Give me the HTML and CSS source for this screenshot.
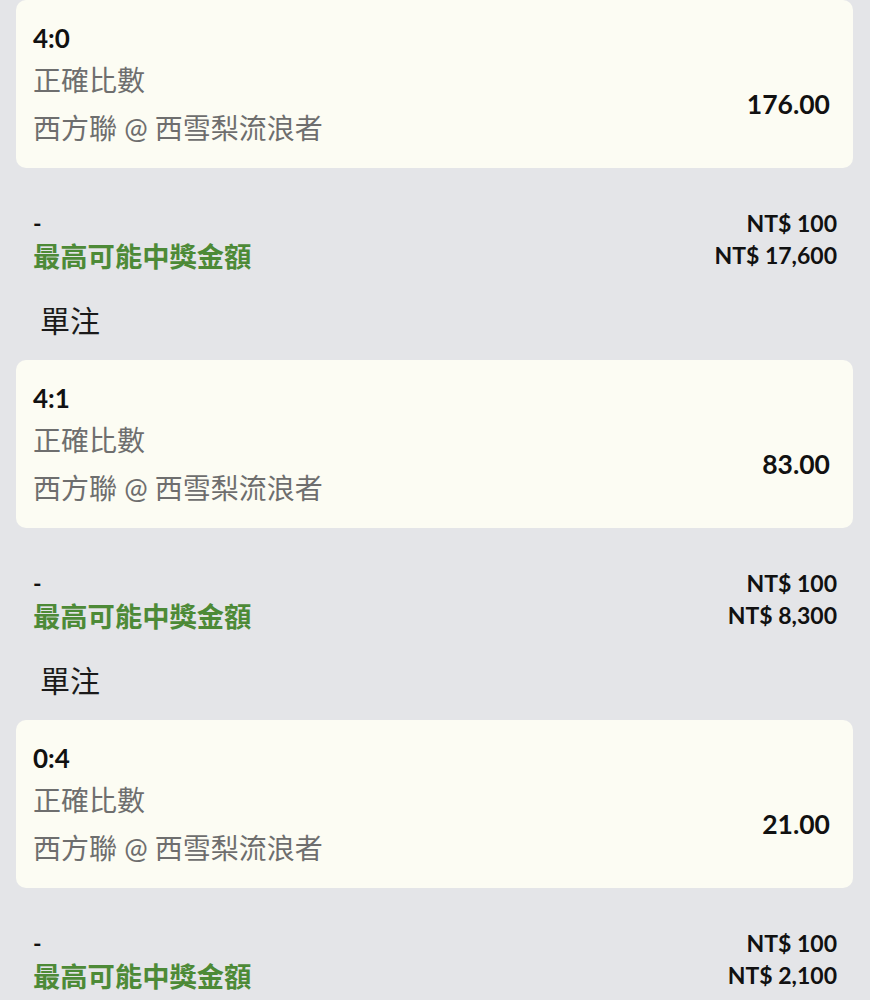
FILE: index.html
```html
<!DOCTYPE html>
<html lang="zh-Hant">
<head>
<meta charset="utf-8">
<title>單注</title>
<link rel="stylesheet" href="styles.css">
</head>
<body>
<div class="list">
  <section class="bet">
    <div class="card">
      <div class="score">4:0</div>
      <div class="card-row">
        <div class="info">
          <div class="market">正確比數</div>
          <div class="match">西方聯 @ 西雪梨流浪者</div>
        </div>
        <div class="odds">176.00</div>
      </div>
    </div>
    <div class="summary">
      <div class="sum-row"><span class="dash">-</span><span class="amt">NT$ 100</span></div>
      <div class="sum-row"><span class="win-label">最高可能中獎金額</span><span class="amt">NT$ 17,600</span></div>
    </div>
    <div class="type">單注</div>
  </section>
  <section class="bet">
    <div class="card">
      <div class="score">4:1</div>
      <div class="card-row">
        <div class="info">
          <div class="market">正確比數</div>
          <div class="match">西方聯 @ 西雪梨流浪者</div>
        </div>
        <div class="odds">83.00</div>
      </div>
    </div>
    <div class="summary">
      <div class="sum-row"><span class="dash">-</span><span class="amt">NT$ 100</span></div>
      <div class="sum-row"><span class="win-label">最高可能中獎金額</span><span class="amt">NT$ 8,300</span></div>
    </div>
    <div class="type">單注</div>
  </section>
  <section class="bet">
    <div class="card">
      <div class="score">0:4</div>
      <div class="card-row">
        <div class="info">
          <div class="market">正確比數</div>
          <div class="match">西方聯 @ 西雪梨流浪者</div>
        </div>
        <div class="odds">21.00</div>
      </div>
    </div>
    <div class="summary">
      <div class="sum-row"><span class="dash">-</span><span class="amt">NT$ 100</span></div>
      <div class="sum-row"><span class="win-label">最高可能中獎金額</span><span class="amt">NT$ 2,100</span></div>
    </div>
  </section>
</div>
</body>
</html>
```
FILE: styles.css
```css
html, body {
  margin: 0;
  padding: 0;
  background: #e4e5e8;
}
body {
  font-family: Lato, "Noto Sans CJK TC", sans-serif;
  color: #111;
}
.list {
  padding: 0 17px 8px 16px;
}
.bet {
  display: flex;
  flex-direction: column;
}
.card {
  background: #fcfcf3;
  border-radius: 10px;
  height: 168px;
  box-sizing: border-box;
  padding: 20px 23px 16px 17px;
}
.score {
  font-size: 26px;
  font-weight: 700;
  line-height: 36px;
  color: #111;
}
.card-row {
  display: flex;
  align-items: center;
  justify-content: space-between;
}
.market, .match {
  font-size: 28px;
  line-height: 48px;
  color: #6e6e6e;
}
.odds {
  font-size: 26.5px;
  font-weight: 700;
  color: #111;
}
.summary {
  margin-top: 39px;
  padding: 0 16px 0 17px;
}
.sum-row {
  display: flex;
  justify-content: space-between;
  align-items: center;
  height: 32px;
}
.dash {
  font-size: 23px;
  font-weight: 700;
}
.amt {
  font-size: 23px;
  font-weight: 700;
  color: #111;
}
.win-label {
  font-size: 27.3px;
  font-weight: 700;
  color: #4d8a37;
}
.type {
  margin-top: 29px;
  margin-bottom: 20px;
  padding-left: 24px;
  font-size: 30px;
  line-height: 40px;
  color: #1a1a1a;
}
```
